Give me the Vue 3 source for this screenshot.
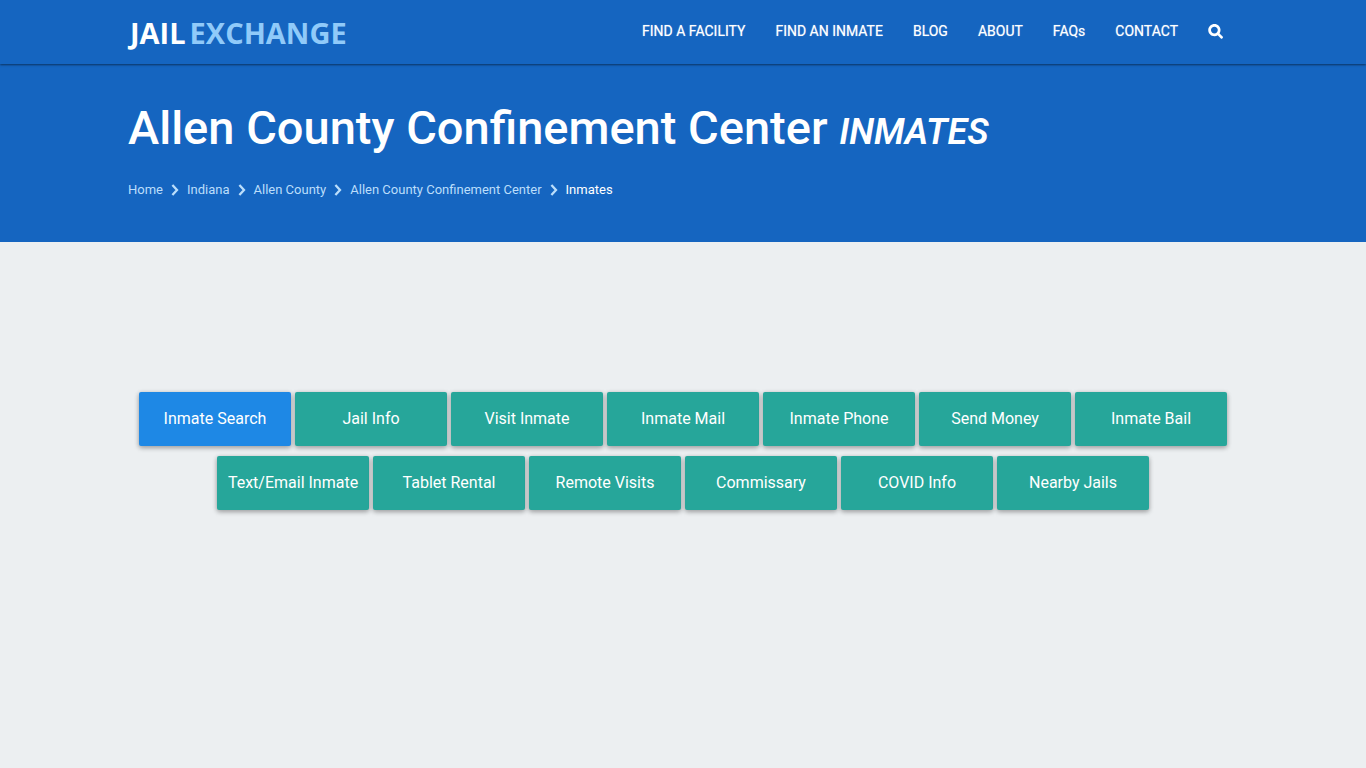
<script setup>
const navLinks = ['FIND A FACILITY', 'FIND AN INMATE', 'BLOG', 'ABOUT', 'FAQs', 'CONTACT']
const crumbs = ['Home', 'Indiana', 'Allen County', 'Allen County Confinement Center']
const services = [
  'Inmate Search', 'Jail Info', 'Visit Inmate', 'Inmate Mail', 'Inmate Phone', 'Send Money', 'Inmate Bail',
  'Text/Email Inmate', 'Tablet Rental', 'Remote Visits', 'Commissary', 'COVID Info', 'Nearby Jails'
]
</script>

<template>
  <div class="page">
    <header class="topbar">
      <div class="container bar">
        <a class="logo" href="#" aria-label="JailExchange home"><span>JAIL</span><span class="logo-light">EXCHANGE</span></a>
        <nav class="menu" aria-label="Main">
          <a v-for="item in navLinks" :key="item" href="#">{{ item }}</a>
          <a href="#" class="search" aria-label="Search">
            <svg viewBox="0 0 512 512" width="15" height="15" fill="currentColor" aria-hidden="true">
              <path d="M500 428L394 322c22-33 34-73 34-115C428 93 335 0 221 0S8 93 8 207s93 213 213 213c41 0 80-12 112-32l106 107c13 13 33 13 46 0l15-15c14-14 14-38 0-52zM218 326c-65 0-117-52-117-117S153 92 218 92s117 52 117 117-52 117-117 117z" />
            </svg>
          </a>
        </nav>
      </div>
    </header>
    <section class="banner">
      <div class="container">
        <h1>Allen County Confinement Center <em>INMATES</em></h1>
        <nav class="crumbs" aria-label="Breadcrumb">
          <template v-for="crumb in crumbs" :key="crumb">
            <a href="#">{{ crumb }}</a>
            <svg class="chevron" viewBox="0 0 8 12" width="8" height="12" fill="none" aria-hidden="true">
              <path d="M1.4 1L6 6L1.4 11" stroke="currentColor" stroke-width="2.3" />
            </svg>
          </template>
          <span class="current" aria-current="page">Inmates</span>
        </nav>
      </div>
    </section>
    <main class="container services">
      <a v-for="(service, i) in services" :key="service" href="#" class="tile" :class="{ active: i === 0 }">{{ service }}</a>
    </main>
  </div>
</template>

<style>
body {
  background: #eceff1;
}
</style>

<style scoped>
.page {
  min-height: 100vh;
  background: #eceff1;
  font-family: Roboto, "Liberation Sans", sans-serif;
  color: #fff;
}
a {
  color: inherit;
  text-decoration: none;
}
.container {
  box-sizing: border-box;
  width: calc(100% - 32px);
  max-width: 1110px;
  margin: 0 auto;
}
.topbar {
  position: relative;
  background: #1565c0;
  box-shadow: 0 1px 2px rgba(0, 0, 0, 0.5);
}
.bar {
  display: flex;
  justify-content: space-between;
  height: 64px;
}
.logo {
  display: flex;
  gap: 4px;
  padding: 0 2px;
  font-family: "Open Sans", "Noto Sans", sans-serif;
  font-size: 29px;
  font-weight: 700;
  line-height: 66px;
}
.logo-light {
  color: #90caf9;
}
.menu {
  display: flex;
  font-size: 14px;
  font-weight: 400;
  line-height: 62px;
  text-shadow: 0 0 1px rgba(255, 255, 255, 0.6);
}
.menu a {
  padding: 0 15px;
}
.menu .search {
  display: flex;
  align-items: center;
  height: 62px;
}
.banner {
  background: #1565c0;
  padding: 36px 0 42px;
}
h1 {
  margin: 0;
  font-size: 47px;
  font-weight: 500;
  line-height: 56px;
}
h1 em {
  font-size: 36px;
  font-weight: 600;
}
.crumbs {
  display: flex;
  align-items: center;
  gap: 8px;
  margin-top: 20px;
  font-size: 13px;
  line-height: 20px;
  color: #bbdefb;
}
.current {
  color: #fff;
}
.services {
  display: flex;
  flex-wrap: wrap;
  justify-content: center;
  gap: 10px 4px;
  padding: 150px 0 60px;
}
.tile {
  width: 152px;
  border-radius: 2px;
  background: #26a69a;
  box-shadow: 0 2px 5px rgba(0, 0, 0, 0.26), 0 1px 5px rgba(0, 0, 0, 0.14);
  font-size: 16px;
  line-height: 54px;
  text-align: center;
  white-space: nowrap;
}
.tile.active {
  background: #1e88e5;
}
</style>
